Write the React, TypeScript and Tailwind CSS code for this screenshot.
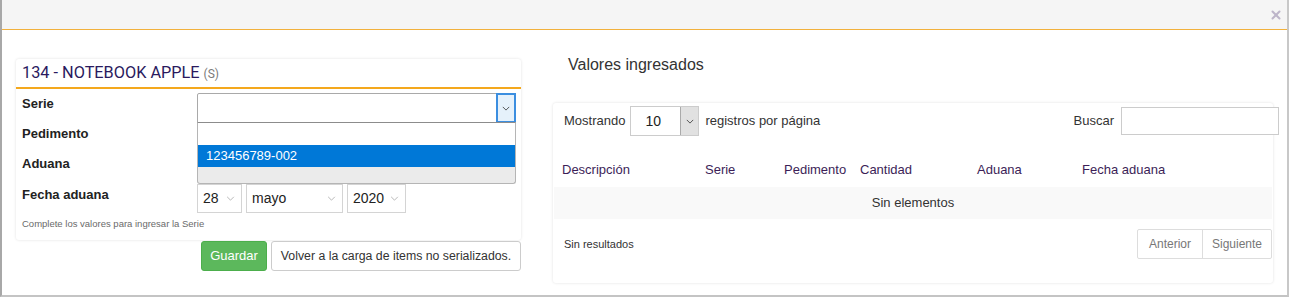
import { X } from 'lucide-react';

function Chevron({ className }: { className?: string }) {
  return (
    <svg viewBox="0 0 10 6" className={className} fill="none" stroke="currentColor" strokeWidth="1">
      <polyline points="1,1 5,5 9,1" />
    </svg>
  );
}

function DateSelect({ value, width }: { value: string; width: string }) {
  return (
    <div className={`${width} h-[29px] border border-[#d4d4d4] bg-white flex items-center justify-between pl-[5px] pr-[6px]`}>
      <span className="text-[14px] text-[#222]">{value}</span>
      <Chevron className="w-[9px] h-[5px] text-[#aaa]" />
    </div>
  );
}

const columns = [
  { label: 'Descripción', w: 'w-[143px]' },
  { label: 'Serie', w: 'w-[79px]' },
  { label: 'Pedimento', w: 'w-[76px]' },
  { label: 'Cantidad', w: 'w-[117px]' },
  { label: 'Aduana', w: 'w-[105px]' },
  { label: 'Fecha aduana', w: 'flex-1' },
];

export default function App() {
  return (
    <div className="w-[1289px] h-[298px] bg-white overflow-hidden font-['Liberation_Sans',Arial,sans-serif] text-[#333]">
      <div className="h-[297px] border-l-2 border-r-2 border-b-2 border-l-[#a8a8a8] border-r-[#c8c8c8] border-b-[#c4c4c4] flex flex-col">
        {/* header */}
        <div className="h-[30px] bg-[#f5f5f5] border-b border-[#f2b13c] flex items-center justify-end pr-[4px] shrink-0">
          <X className="w-[14px] h-[14px] text-[#bdb5c9]" strokeWidth={3.5} />
        </div>

        <div className="flex flex-1">
          {/* left */}
          <div className="w-[551px] pl-[14px] pt-[29px] shrink-0">
            <div className="w-[505px] bg-white rounded-[3px] shadow-[0_0_3px_rgba(0,0,0,0.12)] pb-[10px]">
              <div className="h-[30px] border-b-2 border-[#f4a81d] flex items-end pb-[5px] pl-[6px]">
                <span className="font-['Roboto',sans-serif] text-[16.3px] leading-[18px] text-[#2a1a5e]">134 - NOTEBOOK APPLE</span>
                <span className="font-['Roboto',sans-serif] text-[12px] leading-[16px] text-[#7a7a7a] ml-[4px]">(S)</span>
              </div>

              <div className="pt-[4px] pl-[6px]">
                {/* Serie */}
                <div className="flex h-[30px]">
                  <div className="w-[175px] pt-[3px] text-[13px] leading-[15px] font-bold text-[#222]">Serie</div>
                  <div className="relative">
                    <div className="w-[319px] h-[30px] border border-[#a9a9a9] rounded-t-[2px] bg-white flex justify-end">
                      <div className="w-[20px] h-[30px] -my-[1px] -mr-[1px] border-2 border-[#3b8ee0] bg-[#e5f1fb] flex items-center justify-center">
                        <Chevron className="w-[8px] h-[5px] text-[#333]" />
                      </div>
                    </div>
                    <div className="absolute left-0 top-[29px] w-[319px] z-10 border border-[#b5b5b5] border-t-[#8c8c8c] rounded-b-[3px] bg-[#ebebeb] overflow-hidden">
                      <div className="h-[22px] bg-white"></div>
                      <div className="h-[22px] bg-[#0078d7] text-white text-[13px] leading-[22px] pl-[8px]">123456789-002</div>
                      <div className="h-[16px]"></div>
                    </div>
                  </div>
                </div>
                {/* Pedimento */}
                <div className="flex h-[30px]">
                  <div className="w-[175px] pt-[3px] text-[13px] leading-[15px] font-bold text-[#222]">Pedimento</div>
                </div>
                {/* Aduana */}
                <div className="flex h-[30px]">
                  <div className="w-[175px] pt-[3px] text-[13px] leading-[15px] font-bold text-[#222]">Aduana</div>
                </div>
                {/* Fecha */}
                <div className="flex h-[30px]">
                  <div className="w-[175px] pt-[4px] text-[13px] leading-[15px] font-bold text-[#222]">Fecha aduana</div>
                  <div className="flex gap-[4px] pt-[1px]">
                    <DateSelect value="28" width="w-[45px]" />
                    <DateSelect value="mayo" width="w-[97px]" />
                    <DateSelect value="2020" width="w-[59px]" />
                  </div>
                </div>
                <div className="pt-[5px] text-[9.5px] leading-[12px] text-[#6a6a6a]">Complete los valores para ingresar la Serie</div>
              </div>
            </div>

            <div className="flex gap-[4px] pl-[185px] mt-[1px]">
              <button className="w-[66px] h-[30px] bg-[#5cb85c] border border-[#4cae4c] rounded-[3px] text-white text-[13px]">Guardar</button>
              <button className="w-[250px] h-[30px] bg-white border border-[#ccc] rounded-[3px] text-[#333] text-[12.3px]">Volver a la carga de items no serializados.</button>
            </div>
          </div>

          {/* right */}
          <div className="flex-1 pt-[25px]">
            <div className="pl-[15px] text-[16px] leading-[20px] text-[#333]">Valores ingresados</div>
            <div className="mt-[28px] w-[720px] rounded-[3px] bg-white shadow-[0_0_3px_rgba(0,0,0,0.12)] pt-[3px] pb-[24px]">
              <div className="flex items-center h-[30px] pl-[11px]">
                <span className="text-[13px]">Mostrando</span>
                <div className="ml-[5px] w-[69px] h-[30px] border border-[#ccc] bg-white flex">
                  <span className="flex-1 pl-[14px] text-[14px] leading-[28px] text-[#222]">10</span>
                  <div className="w-[18px] h-[28px] bg-[#e1e1e1] border-l border-[#aaa] flex items-center justify-center">
                    <Chevron className="w-[8px] h-[5px] text-[#333]" />
                  </div>
                </div>
                <span className="ml-[6px] text-[13px]">registros por página</span>
                <span className="ml-auto text-[13px]">Buscar</span>
                <div className="ml-[7px] -mr-[6px] w-[158px] h-[28px] border border-[#ccc] bg-white"></div>
              </div>

              <div className="flex h-[51px] items-end pb-[9px] pl-[9px]">
                {columns.map((c) => (
                  <div key={c.label} className={`${c.w} text-[13px] leading-[16px] text-[#3c1e57]`}>{c.label}</div>
                ))}
              </div>
              <div className="h-[32px] bg-[#f9f9f9] mx-[1px] flex items-center justify-center text-[13px] text-[#333]">Sin elementos</div>

              <div className="flex items-center justify-between mt-[10px] pl-[11px] pr-[1px]">
                <span className="text-[11px] text-[#333] mt-[1px]">Sin resultados</span>
                <div className="flex h-[30px] border border-[#ddd] rounded-[2px] text-[12px] text-[#777]">
                  <div className="w-[65px] flex items-center justify-center border-r border-[#ddd]">Anterior</div>
                  <div className="w-[68px] flex items-center justify-center">Siguiente</div>
                </div>
              </div>
            </div>
          </div>
        </div>
      </div>
    </div>
  );
}
